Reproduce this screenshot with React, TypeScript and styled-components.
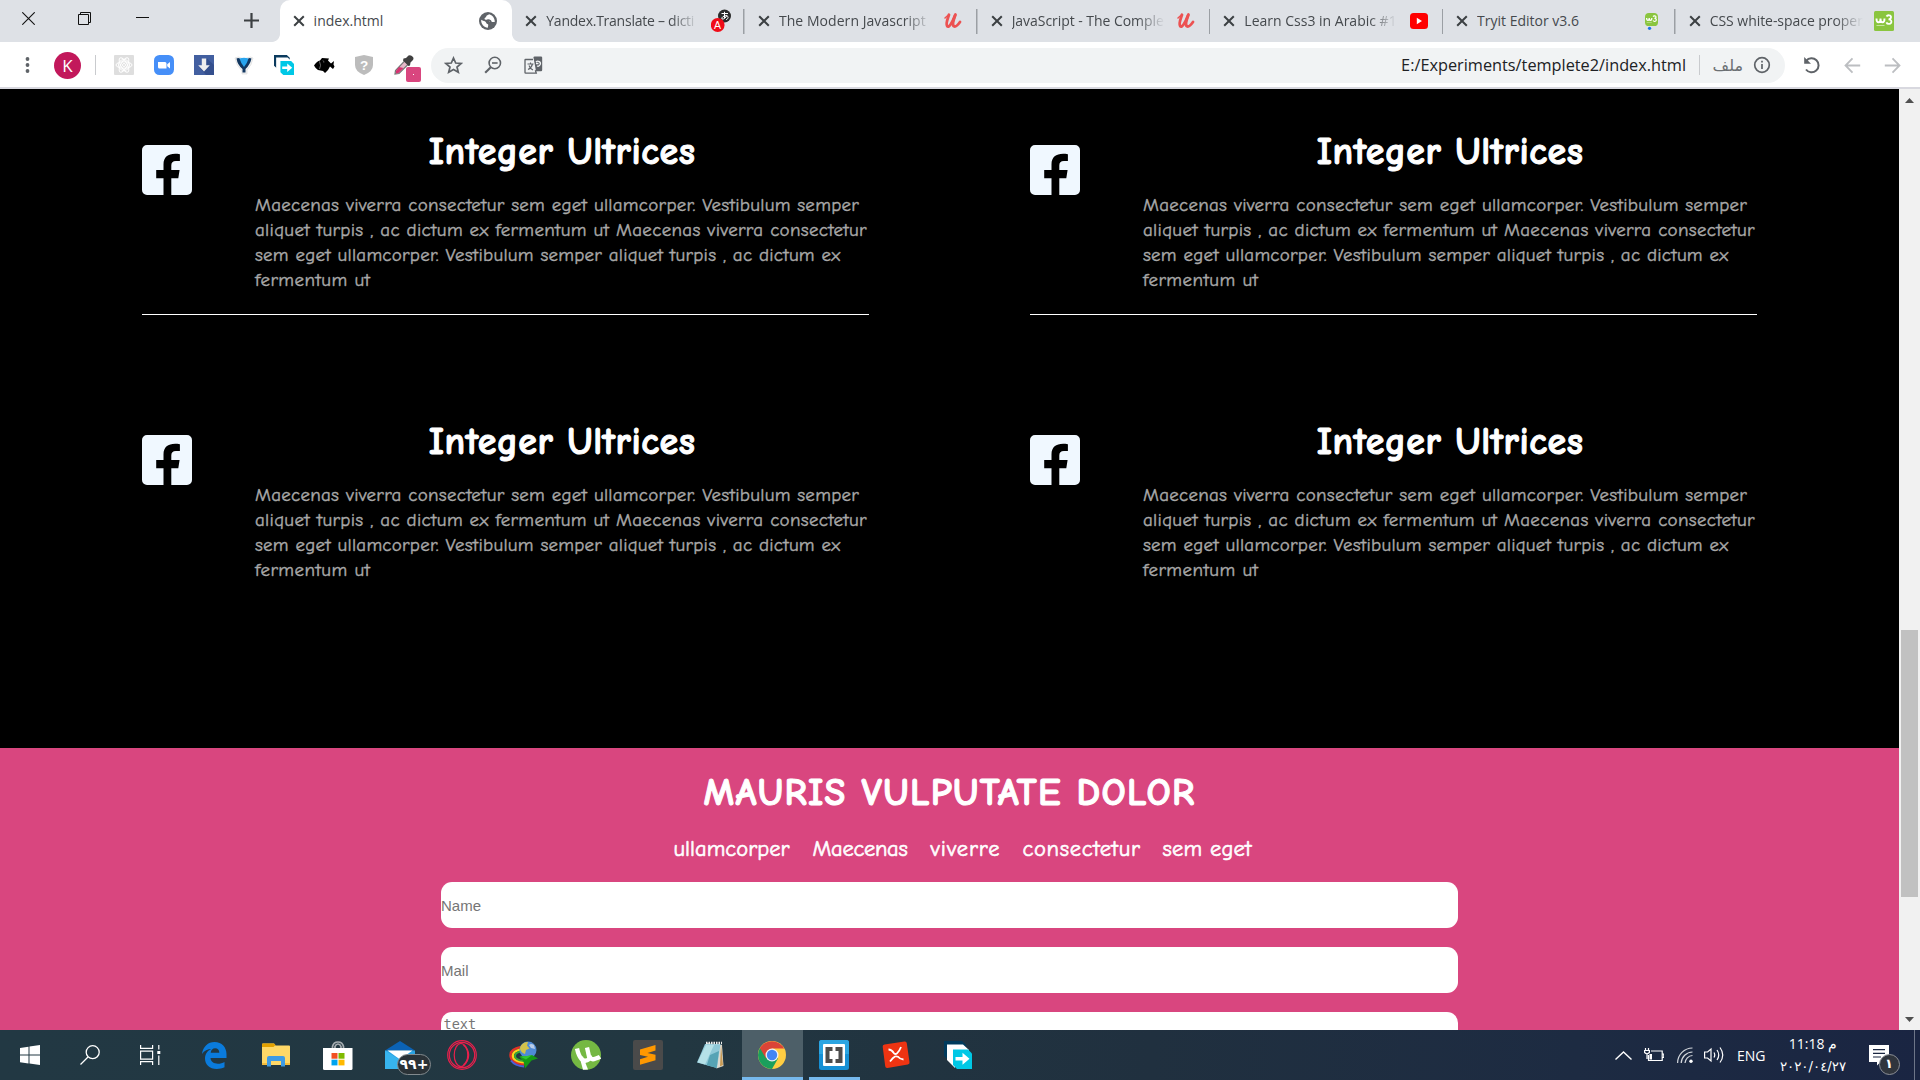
import React from 'react';
import styled, { createGlobalStyle, css } from 'styled-components';

const comic = '"Comic Sans MS", "Comic Neue", "Open Sans", sans-serif';
const ui = '"Open Sans", "Noto Sans", sans-serif';

const GlobalStyle = createGlobalStyle`
  * { box-sizing: border-box; }
  body { margin: 0; overflow: hidden; background: #000; }
  svg { display: block; flex: none; }
`;

const Screen = styled.div`
  width: 1920px;
  height: 1080px;
  display: flex;
  flex-direction: column;
  overflow: hidden;
  font-family: ${ui};
`;

/* ---------- tab strip ---------- */

const TabStrip = styled.div`
  height: 42px;
  flex: none;
  display: flex;
  background: #dee1e6;
`;

const WindowControls = styled.div`
  width: 279.6px;
  flex: none;
  display: flex;
  align-items: flex-start;
  padding: 12px 0 0 22px;
`;

const ControlSlot = styled.span<{ $gap: number; $drop?: number }>`
  margin-right: ${(p) => p.$gap}px;
  margin-top: ${(p) => p.$drop ?? 0}px;
`;

const Tab = styled.div<{ $active?: boolean; $divided?: boolean }>`
  position: relative;
  width: 232.7px;
  flex: none;
  display: flex;
  align-items: center;
  padding-left: 13px;
  background: ${(p) => (p.$active ? '#fff' : 'transparent')};
  border-radius: 10px 10px 0 0;
  ${(p) =>
    p.$divided &&
    css`
      background: linear-gradient(#9b9fa4, #9b9fa4) right 0 top 9px / 1.5px 25px no-repeat;
      border-radius: 0;
    `}
  ${(p) =>
    p.$active &&
    css`
      &::before,
      &::after {
        content: '';
        position: absolute;
        bottom: 0;
        width: 8px;
        height: 8px;
      }
      &::before {
        left: -8px;
        background: radial-gradient(circle at 0 0, transparent 7.5px, #fff 8.2px);
      }
      &::after {
        right: -8px;
        background: radial-gradient(circle at 100% 0, transparent 7.5px, #fff 8.2px);
      }
    `}
`;

const TabTitle = styled.span<{ $fade?: boolean; $spacing?: number }>`
  width: 153px;
  margin: 0 11px 0 9px;
  flex: none;
  overflow: hidden;
  white-space: nowrap;
  font-size: 14px;
  line-height: 20px;
  letter-spacing: ${(p) => p.$spacing ?? 0}px;
  color: #45494d;
  ${(p) => p.$fade && 'mask-image: linear-gradient(90deg, #000 calc(100% - 28px), transparent);'}
`;

const Favicon = styled.span`
  width: 21px;
  display: flex;
  justify-content: center;
`;

/* ---------- toolbar ---------- */

const Toolbar = styled.div`
  height: 47px;
  flex: none;
  display: flex;
  align-items: center;
  padding: 1px 0 0 22px;
  background: #fff;
  border-bottom: 2px solid #d8d8df;
`;

const Avatar = styled.span`
  width: 27px;
  height: 27px;
  margin: 0 14px 0 21px;
  border-radius: 50%;
  display: grid;
  place-items: center;
  background: #c2185b;
  color: #fff;
  font: 17px/27px ${ui};
`;

const Rule = styled.span`
  width: 1px;
  height: 20px;
  background: #c9cbce;
`;

const Extensions = styled.div`
  width: 319px;
  display: flex;
  padding-left: 8px;
  margin-right: 16px;
`;

const Extension = styled.span`
  position: relative;
  width: 40px;
  flex: none;
  display: grid;
  place-items: center;
`;

const ColorBadge = styled.i`
  position: absolute;
  left: 22px;
  top: 12px;
  width: 15px;
  height: 15px;
  border-radius: 2px;
  background: #d9467f;
  display: grid;
  place-items: center;
  &::after {
    content: '';
    width: 1.5px;
    height: 1.5px;
    background: #fff;
  }
`;

const Omnibox = styled.div`
  width: 1354px;
  height: 35px;
  flex: none;
  display: flex;
  align-items: center;
  padding: 0 14px 0 12px;
  border-radius: 18px;
  background: #f1f3f4;
`;

const OmniIcon = styled.span`
  width: 40px;
  display: flex;
  padding-left: 1px;
`;

const Address = styled.span`
  margin-left: auto;
  margin-right: 13px;
  font-size: 16.3px;
  letter-spacing: 0;
  color: #202124;
`;

const Scheme = styled.span`
  width: 33px;
  margin: 0 10px;
  font: 16px 'DejaVu Sans', sans-serif;
  color: #6b6f73;
  direction: rtl;
  white-space: nowrap;
`;

const NavButtons = styled.div`
  display: flex;
  padding-left: 7px;
`;

const NavButton = styled.span`
  width: 40px;
  display: grid;
  place-items: center;
`;

/* ---------- page ---------- */

const Viewport = styled.div`
  height: 941px;
  flex: none;
  display: flex;
`;

const Page = styled.main`
  width: 1899px;
  height: 941px;
  overflow: hidden;
  background: #000;
`;

const Features = styled.section`
  height: 659px;
  display: grid;
  grid-template-columns: 727px 727px;
  grid-template-rows: 290px 290px;
  column-gap: 161px;
  padding-left: 142px;
`;

const Feature = styled.article<{ $ruled?: boolean }>`
  height: 226px;
  display: flex;
  padding-top: 56px;
  border-bottom: ${(p) => (p.$ruled ? '1px solid #fff' : 'none')};
`;

const FeatureBody = styled.div`
  width: 614px;
  margin-left: 63px;
  margin-top: -17px;
`;

const FeatureTitle = styled.h2`
  margin: 0 0 17px;
  height: 48px;
  text-align: center;
  font: bold 38px/48px ${comic};
  letter-spacing: 0.5px;
  color: #fff;
  -webkit-text-stroke: 1px #fff;
`;

const FeatureText = styled.p`
  margin: 0;
  font: 19px/25px ${comic};
  color: #a9a9a9;
  -webkit-text-stroke: 0.4px #a9a9a9;
`;

const Line = styled.span<{ $spacing: number }>`
  display: block;
  white-space: nowrap;
  letter-spacing: ${(p) => p.$spacing}px;
`;

const Contact = styled.section`
  height: 282px;
  display: flex;
  flex-direction: column;
  align-items: center;
  padding-top: 21px;
  overflow: hidden;
  background: #d9467f;
`;

const ContactTitle = styled.h2`
  margin: 0;
  height: 48px;
  font: bold 38px/48px ${comic};
  letter-spacing: 1.3px;
  color: #fff;
  -webkit-text-stroke: 1px #fff;
`;

const Links = styled.nav`
  display: grid;
  grid-template-columns: 139px 118px 92px 140px 90px;
  width: 579px;
  height: 30px;
  margin: 17px 0 18px 27px;
`;

const Link = styled.a<{ $spacing: number }>`
  font: 22.5px/30px ${comic};
  letter-spacing: ${(p) => p.$spacing}px;
  white-space: nowrap;
  color: #fff;
  -webkit-text-stroke: 0.6px #fff;
`;

const Field = styled.input`
  width: 1017px;
  height: 46px;
  flex: none;
  margin: 0 0 19px;
  padding: 0;
  border: 0;
  border-radius: 11px;
  background: #fff;
  font: 15px 'Liberation Sans', Arial, sans-serif;
  &::placeholder {
    color: #757575;
  }
`;

const Message = styled.textarea`
  width: 1017px;
  height: 80px;
  flex: none;
  padding: 3px 2.5px;
  border: 0;
  border-radius: 11px;
  resize: none;
  background: #fff;
  font: 13.6px/18px 'DejaVu Sans Mono', monospace;
  &::placeholder {
    color: #757575;
  }
`;

const Scrollbar = styled.div`
  width: 21px;
  height: 941px;
  display: flex;
  flex-direction: column;
  align-items: center;
  padding: 9px 1px 8px 0;
  background: #f1f1f1;
`;

const Thumb = styled.div`
  width: 17px;
  height: 267px;
  margin: 527px 0 auto 1px;
  background: #c1c1c1;
`;

/* ---------- taskbar ---------- */

const Taskbar = styled.footer`
  height: 50px;
  flex: none;
  display: flex;
  background: linear-gradient(90deg, #223843 0%, #223741 35%, #20303f 60%, #1d2b42 82%, #1a2542 100%);
  color: #fff;
`;

const SystemButton = styled.span`
  width: 60px;
  display: grid;
  place-items: center;
`;

const AppButton = styled.span<{ $state?: 'active' | 'running' }>`
  position: relative;
  width: 62px;
  display: grid;
  place-items: center;
  ${(p) =>
    p.$state === 'active' &&
    css`
      background: linear-gradient(#76b9ed, #76b9ed) 1px 100% / 61px 3px no-repeat,
        linear-gradient(#4d5f68, #4d5f68) 1px 0 / 61px 100% no-repeat;
    `}
  ${(p) =>
    p.$state === 'running' &&
    css`
      background: linear-gradient(#76b9ed, #76b9ed) 6px 100% / 51px 3px no-repeat;
    `}
`;

const Apps = styled.div`
  display: flex;
  padding-left: 3px;
`;

const MailBadge = styled.i`
  position: absolute;
  left: 28px;
  top: 24px;
  width: 34px;
  height: 21px;
  border: 1px solid #838a8e;
  border-radius: 11px;
  background: #2a3237;
  font: bold 14px/18px 'DejaVu Sans', sans-serif;
  text-align: center;
  direction: ltr;
  unicode-bidi: bidi-override;
`;

const Tray = styled.div`
  margin-left: auto;
  width: 305px;
  display: flex;
  align-items: center;
`;

const TrayIcon = styled.span<{ $width: number }>`
  width: ${(p) => p.$width}px;
  flex: none;
`;

const Language = styled.span`
  width: 42px;
  padding-top: 1px;
  font-size: 14px;
`;

const Clock = styled.div`
  width: 68px;
  display: flex;
  flex-direction: column;
  align-items: center;
  font: 14px/22px ${ui};
  white-space: nowrap;
`;

const Time = styled.span`
  letter-spacing: -0.4px;
`;

const DateText = styled.span`
  direction: ltr;
  unicode-bidi: bidi-override;
  padding-top: 1px;
  font: 13.3px/22px 'DejaVu Sans', sans-serif;
`;

const Notifications = styled.span`
  position: relative;
  width: 46px;
  height: 50px;
  margin-left: 22px;
  padding-top: 15px;
  border-right: 1px solid #6d7688;
`;

const Count = styled.i`
  position: absolute;
  left: 9.5px;
  top: 24px;
  width: 21px;
  height: 21px;
  border: 1px solid #8b8f96;
  border-radius: 50%;
  background: #30353d;
  font: bold 13px/18px 'DejaVu Sans', sans-serif;
  text-align: center;
`;

/* ---------- drawings ---------- */

const CloseGlyph = () => (
  <svg width="12" height="12" viewBox="0 0 12 12" stroke="#3c4043" strokeWidth="2" fill="none">
    <path d="M1.2 1.2 10.8 10.8M10.8 1.2 1.2 10.8" />
  </svg>
);

const Globe = () => (
  <svg width="18" height="18" viewBox="0 0 18 18">
    <circle cx="9" cy="9" r="9" fill="#5f6368" />
    <path d="M10.200 2.200c-1 .8-3 1-3 2.400 0 1.200-1.700.8-1.700 2.200 0 1 1.300.9 2.700.9 1.700 0 1.200 1.700 2.600 1.700 1.100 0 1.700.6 3.200.6 1 0 1.700-.5 1.900-.3C15.500 5.700 13.500 3 10.200 2.200z" fill="#fff" />
    <path d="M2.200 7.700c1.800 1 3.700 1.300 4.500 2.200.9 1 .5 1.600 1.800 2 1.300.5.6 1.700.3 3.800C5 15.500 1.800 12 2.200 7.700z" fill="#fff" />
    <path d="M7.800 8.800c1.500-1.300 3.700-.5 4.200 1.200" fill="none" stroke="#5f6368" strokeWidth="1.600" />
  </svg>
);

const YandexIcon = () => (
  <svg width="20" height="24" viewBox="0 0 20 24">
    <circle cx="13.500" cy="7" r="6.500" fill="#2b2b2b" />
    <path d="M10.500 4.500h6.500M13.500 2.800v6.500M16 6c-1 3-3.500 4.500-5 4 -1-1 1.500-3.500 4-3.300 3 .3 2.500 3.300 0 4" fill="none" stroke="#fff" strokeWidth="1" />
    <circle cx="6.700" cy="16" r="6.900" fill="#f00c18" />
    <text x="3" y="20" fontSize="10.500" fill="#fff" fontFamily="Liberation Sans">A</text>
  </svg>
);

const Udemy = () => (
  <svg width="20" height="20" viewBox="0 0 20 20" fill="none" stroke="#ec5252" strokeLinecap="round" strokeLinejoin="round">
    <path strokeWidth="2.800" d="M6 3.800C4.800 7.500 2.300 13 4.200 15.300 6.200 17 9.500 11 12 4.500" />
    <path strokeWidth="2.800" d="M12.500 3.500C11 8 8.500 13.500 11 15.300c2 1 4-1.500 6-4.300" />
    <path strokeWidth="1.500" d="M2 7 6 3.500" />
  </svg>
);

const YouTube = () => (
  <svg width="18" height="16" viewBox="0 0 18 16">
    <rect width="18" height="16" rx="3.500" fill="#f00" />
    <path d="M6.800 4.800v6.400L12 8z" fill="#fff" />
  </svg>
);

const W3 = ({ size, dot }: { size: number; dot?: boolean }) => (
  <svg width={size} height={dot ? size + 4 : size} viewBox={`0 0 20 ${dot ? 26 : 20}`}>
    <rect width="20" height="20" rx={dot ? 6 : 1.5} fill="#8ac53f" />
    <path d="M2.500 7.500c0 5 4 5 4 0 0 5 4 5 4 0" fill="none" stroke="#fff" strokeWidth="1.900" />
    <path d="M12.500 5.500c1-2 4.700-1.500 4.500.8-.1 1.700-1.500 2-2.500 2 1.500 0 3 .7 2.900 2.500-.1 2.500-4 3-5 .5" fill="none" stroke="#fff" strokeWidth="1.800" />
    <path d="M2.500 14.500h8" stroke="#c7e4a0" strokeWidth="1" />
    {dot && <circle cx="7" cy="23.500" r="2.500" fill="#1a73e8" />}
  </svg>
);

const ReactExt = () => (
  <svg width="20" height="20" viewBox="0 0 20 20" fill="none" stroke="#fff" strokeWidth="1">
    <rect width="20" height="20" rx="1" fill="#dedede" stroke="none" />
    <ellipse cx="10" cy="10" rx="8" ry="3.200" />
    <ellipse cx="10" cy="10" rx="8" ry="3.200" transform="rotate(60 10 10)" />
    <ellipse cx="10" cy="10" rx="8" ry="3.200" transform="rotate(120 10 10)" />
    <circle cx="10" cy="10" r="5.500" />
    <circle cx="10" cy="10" r="1.500" />
  </svg>
);

const ZoomExt = () => (
  <svg width="20" height="20" viewBox="0 0 20 20">
    <rect width="20" height="20" rx="5.500" fill="#468ff8" />
    <path d="M4 7h7q1.500 0 1.500 1.500V13.500H5.500Q4 13.500 4 12z M13.200 9.300 16 7v6.500l-2.800-2.200z" fill="#fff" />
  </svg>
);

const DownExt = () => (
  <svg width="20" height="20" viewBox="0 0 20 20">
    <rect width="20" height="20" fill="#425fa0" />
    <path d="M13 3.500 20 10v10H12L6 13z" fill="#344f8d" />
    <path d="M7.800 3.500h4.400v6.700h3.600L10 16.500 4.200 10.200h3.600z" fill="#eee" />
  </svg>
);

const VExt = () => (
  <svg width="20" height="20" viewBox="0 0 20 20">
    <path d="M1 3q4-2 6 0 3 2 6 0 4-2 6 0-1 7-6 12v4H8v-3Q2 10 1 3z" fill="#f2f2f2" stroke="#ddd" strokeWidth=".7" />
    <path d="M2.500 3.500Q5 2 7 4.500l3 6 3-6q2-2.500 4.500-1Q16 10 11.500 14v3.500h-3V14Q3.500 10 2.500 3.500z" fill="#123760" />
    <path d="M5.500 3.500q4.500-1.500 9 0-1.500 5.500-4.500 8.500Q7 8.500 5.500 3.500z" fill="#28a4ee" />
  </svg>
);

const TealStack = ({ size, dark }: { size: number; dark: string }) => (
  <svg width={size} height={size} viewBox="0 0 28 28">
    <path d="M0 0h18l4 4v6H8v12L0 15z" fill={dark} />
    <path d="M3 3.500h16l6 5.500v3H11v15l-8-8z" fill="#fff" />
    <path d="M9 8.500h15l4 4V28H13l-4-4z" fill="#00c8e6" />
    <path d="M11.500 16h7v-4.200l7 6-7 6v-4.200h-7z" fill="#fff" />
  </svg>
);

const Fish = () => (
  <svg width="21" height="16" viewBox="0 0 21 16">
    <path d="M0 8.500Q3 4 6 3.500L8 1l7 .5-1 2 3 3 3-2.500-.500 3.500 1 2-1.500 2.500L16 9.500l-2 3.500-3 3-2-2-5-1Q1.500 11.500 0 8.500z" fill="#000" />
    <path d="M5.500 4.500q2 4 0 7.500M9 3.500q1 1 .8 2" fill="none" stroke="#888" strokeWidth=".8" />
  </svg>
);

const ShieldExt = () => (
  <svg width="18" height="20" viewBox="0 0 18 20">
    <path d="M9 0l9 2v8q0 6.500-9 10Q0 16.500 0 10V2z" fill="#bcbcbc" />
    <text x="5" y="14.500" fontSize="13.500" fontWeight="bold" fill="#fff" fontFamily="Liberation Sans">?</text>
  </svg>
);

const Pipette = () => (
  <svg width="20" height="20" viewBox="0 0 20 20">
    <path d="M11 5.500 14.500 9 5 18.500 1 19l.5-3.500z" fill="#e6b8c9" stroke="#777" strokeWidth="1.200" />
    <path d="M5 12 9.500 13 4.500 18 2 18.500 2 16z" fill="#d63371" />
    <path d="M9.500 3.500 12 3l2.500-2.500Q17-.5 19 2q1.200 2-.5 3.500L16.500 7.500 16 10.500 14.500 11 9 5.500z" fill="#404040" />
  </svg>
);

const Star = () => (
  <svg width="19" height="18" viewBox="0 0 19 18" fill="none" stroke="#5f6368" strokeWidth="1.700">
    <path d="M9.500 2l2.200 5 5.400.5-4.100 3.500 1.300 5.200-4.800-2.800-4.800 2.800L6 11 1.900 7.500 7.300 7z" />
  </svg>
);

const ZoomOut = () => (
  <svg width="18" height="18" viewBox="0 0 18 18" fill="none" stroke="#5f6368" strokeWidth="1.600">
    <circle cx="10.800" cy="7" r="5.700" />
    <path d="M8 7h5.600" />
    <path d="M6.800 11.200 1.200 16.800" strokeWidth="2.100" />
  </svg>
);

const Translate = () => (
  <svg width="19" height="19" viewBox="0 0 19 19">
    <path d="M9 3.500H1.500Q1 3.500 1 4v12.500q0 .7.700.7h10.600l-1-3" fill="none" stroke="#5f6368" strokeWidth="1.300" />
    <path d="M9.500 1.500q0-1 1-1H17q1.200 0 1.200 1.200V14q0 1.200-1.200 1.200h-5z" fill="#5f6368" />
    <path d="M3.500 8h6M6.500 6.500V8M8.500 8q-1 4-4.500 5.500M5 9.500q1 3 4 4.500" fill="none" stroke="#5f6368" strokeWidth="1.100" />
    <path d="M12 6a2.500 2.500 0 1 1 1 4M14.500 7.500h-2.500" fill="none" stroke="#f1f3f4" strokeWidth="1.300" />
  </svg>
);

const Info = () => (
  <svg width="18" height="18" viewBox="0 0 18 18" fill="none" stroke="#5f6368" strokeWidth="1.700">
    <circle cx="9" cy="9" r="7.300" />
    <path d="M9 8v5M9 4.800v1.800" />
  </svg>
);

const Reload = () => (
  <svg width="19" height="19" viewBox="0 0 19 19">
    <path d="M3.200 4.800A7 7 0 1 1 3 13.500" fill="none" stroke="#5f6368" strokeWidth="2" />
    <path d="M1.200 1v6.800H8z" fill="#5f6368" />
  </svg>
);

const Arrow = ({ flip }: { flip?: boolean }) => (
  <svg width="17" height="17" viewBox="0 0 17 17" fill="none" stroke="#bcbec1" strokeWidth="1.800">
    <path d={flip ? 'M.8 8.500h14.500M8.500 1.300l7 7.200-7 7.200' : 'M16.200 8.500H1.700M8.500 1.300l-7 7.200 7 7.200'} />
  </svg>
);

const FacebookSquare = () => (
  <svg width="50" height="50" viewBox="0 0 50 50">
    <path
      d="M5 0h40a5 5 0 0 1 5 5v40a5 5 0 0 1-5 5H29.300V33.200h7l1.300-8.200h-8.300v-4.600c0-2.600 1.400-4.300 4.600-4.300h4V9.200c-9.700-1.700-16.400 1.300-16.400 10.200V25h-7.300v8.200h7.300V50H5a5 5 0 0 1-5-5V5a5 5 0 0 1 5-5z"
      fill="#f0f8ff"
    />
  </svg>
);

const WindowsLogo = () => (
  <svg width="20" height="20" viewBox="0 0 20 20" fill="#fff">
    <path d="M0 2.900 8.500 1.700V9.500H0zM9.500 1.500 20 0v9.500H9.500zM0 10.500h8.500v7.900L0 17.200zM9.500 10.500H20V20L9.500 18.500z" />
  </svg>
);

const SearchGlyph = () => (
  <svg width="20" height="20" viewBox="0 0 20 20" fill="none" stroke="#fff" strokeWidth="1.300">
    <circle cx="12.700" cy="7.200" r="6.500" />
    <path d="M8 12 .5 19.500" />
  </svg>
);

const TaskView = () => (
  <svg width="21" height="20" viewBox="0 0 21 20" fill="none" stroke="#fff" strokeWidth="1.200">
    <path d="M.6 0v3.400h12V0M.6 20v-3.400h12V20M.6 6.200h12v8H.6zM18.800 0v4.500M18.800 10.500V20" />
    <path d="M17.300 6h3v3h-3z" fill="#fff" stroke="none" />
  </svg>
);

const Edge = () => (
  <svg width="25" height="27" viewBox="0 0 25 27">
    <path d="M0 12C1 4.500 6 0 12.500 0 20 0 24.500 5.500 24.500 12v4H8.500c.3 4 3.500 5.700 7.300 5.700 2.500 0 4.800-.7 6.700-1.800v5.400c-2.200 1.100-4.900 1.700-7.700 1.700C7.500 27 3 22.500 3 16.500c0-4.300 2.500-7.800 6.300-9.500C6 7 2 8.700 0 12zm8.700-1.200h8.600c0-3-1.500-4.500-4.200-4.500-2.500 0-4 1.700-4.400 4.500z" fill="#0a7bdc" />
  </svg>
);

const Explorer = () => (
  <svg width="28" height="24" viewBox="0 0 28 24">
    <path d="M0 1.500Q0 .5 1 .5h11l1.500 2H27q1 0 1 1V22H0z" fill="#ffd867" />
    <path d="M0 1.500Q0 .5 1 .5h11l1.500 1.500-2 2H0z" fill="#e3a100" />
    <path d="M5 23.500V15q0-2 2-2h14q2 0 2 2v8.500h-4V18H9v5.500z" fill="#3f9be4" />
    <path d="M0 20h5v2H0zM23 20h5v2h-5z" fill="#f5bc3b" />
  </svg>
);

const Store = () => (
  <svg width="30" height="29" viewBox="0 0 30 29">
    <path d="M9.500 8V5.500Q10.500 1 15 1t5.500 4.500V8M12 8V5.500Q13 3 15 3t3 2.500V8" fill="none" stroke="#a6adb1" strokeWidth="1.700" />
    <path d="M0 7h29.500v20.500q0 1.500-1.500 1.500H1.500Q0 29 0 27.500z" fill="#fff" />
    <path d="M8.500 12h6v5.700h-6z" fill="#f25022" />
    <path d="M15.500 12h6v5.700h-6z" fill="#7fba00" />
    <path d="M8.500 18.700h6v5.700h-6z" fill="#00a4ef" />
    <path d="M15.500 18.700h6v5.700h-6z" fill="#ffb900" />
  </svg>
);

const Mail = () => (
  <svg width="30" height="28" viewBox="0 0 30 28">
    <path d="M0 9.500 15 0l15 9.500z" fill="#0b62b4" />
    <path d="M0 9.500h30V28H0z" fill="#2aa2e2" />
    <path d="M2.500 9.500h25L15 18.500z" fill="#fff" />
    <path d="M0 9.500 15 19v9H0z" fill="#37b4ee" />
  </svg>
);

const Opera = () => (
  <svg width="30" height="30" viewBox="0 0 30 30" fill="none" stroke="#e8204c" strokeWidth="1.200">
    <circle cx="15" cy="15" r="14.300" />
    <circle cx="15" cy="15" r="12.700" />
    <ellipse cx="14" cy="15" rx="6.800" ry="11.500" />
    <path d="M16.500 5q5 4 5 10t-5 10" strokeWidth="1.600" />
  </svg>
);

const Idm = () => (
  <svg width="30" height="28" viewBox="0 0 30 28">
    <path d="M12 6Q1.500 8 1.500 14q0 8 14 9.500" fill="none" stroke="#e13226" strokeWidth="2.500" />
    <path d="M12 8.300Q3.800 10 3.800 14.500q0 6 12 7" fill="none" stroke="#ffd21a" strokeWidth="2.200" />
    <path d="M12 10.500q-6 1-6 4.500 0 4 9 5" fill="none" stroke="#39a935" strokeWidth="2" />
    <path d="M2 19.500q4 5.500 13 6" fill="none" stroke="#4c5fd8" strokeWidth="2" />
    <circle cx="19" cy="9" r="8.500" fill="#4f8bd6" />
    <path d="M12 4.500q3-4 7-3.500l-1 3.500 2.500 3-3.500 1.500-1 4q-5-2-5-6z" fill="#d2c34a" />
    <path d="M20 4q2-2 5 0l1 4-4-1z" fill="#b9cde8" />
    <path d="M10 15.500q8 0 13-1.500l6 3.500-6.500 2L16 27.500l-1.500-7z" fill="#169a16" />
    <path d="M11 15.500q8-.5 12-1.500l-6 4.500z" fill="#31c830" />
  </svg>
);

const UTorrent = () => (
  <svg width="30" height="30" viewBox="0 0 30 30">
    <circle cx="15" cy="15" r="15" fill="#75b843" />
    <path d="M6 8.500q1.500 7 4.500 10.500 3.500 3.500 8-.2L16 7.500M18.500 16q1.500 4.500 5.500 2.800 3.500-1 5-2" fill="none" stroke="#fff" strokeWidth="4.300" />
    <path d="M8.500 17l3.500-.5 5 13-5 .2z" fill="#fff" />
  </svg>
);

const Sublime = () => (
  <svg width="30" height="30" viewBox="0 0 30 30">
    <rect width="30" height="30" rx="2" fill="#4a4a4a" />
    <path d="M7 9.500 22.500 5v5.500L14.500 13l8 1.700v5.500L7 24.800v-5.500l8-2.600-8-1.700z" fill="#ff9800" />
  </svg>
);

const Notepad = () => (
  <svg width="28" height="28" viewBox="0 0 28 28">
    <path d="M10 2 26 4l1.500 21-7 2.500z" fill="#ddd9cf" />
    <path d="M25 4l2 20-3 1.500z" fill="#c79a54" />
    <path d="M9 3h15.500L21 27 1 21.500z" fill="#8fc9d8" />
    <path d="M10 4h8L9 23.500 1.500 21.300z" fill="#b5e1e8" />
    <path d="M14 14 23 10l-2.300 17-10-2.700z" fill="#56a3b5" />
    <path d="M10 2h16" stroke="#eee" strokeWidth="2.500" strokeDasharray="1.500 1" />
  </svg>
);

const Chrome = () => (
  <svg width="28" height="28" viewBox="0 0 28 28">
    <circle cx="14" cy="14" r="14" fill="#ffcd42" />
    <path d="M14 14 1.900 7A14 14 0 0 0 14 28l6-10.500z" fill="#1b9f5c" />
    <path d="M1.900 7A14 14 0 0 1 26.100 7.500H14L8 17.500z" fill="#db4437" />
    <circle cx="14" cy="14" r="6.500" fill="#f1f1f1" />
    <circle cx="14" cy="14" r="5.200" fill="#4285f4" />
  </svg>
);

const Brackets = () => (
  <svg width="30" height="30" viewBox="0 0 30 30">
    <rect width="30" height="30" rx="2.500" fill="#1690d5" />
    <path d="M0 2.500Q0 0 2.500 0h25Q30 0 30 2.500V14H0z" fill="#2ba5e2" />
    <rect x="4" y="4" width="22" height="22" rx="1" fill="#fff" />
    <path d="M6.500 7h7v4h-3v8h3v4h-7zM23.500 7h-7v4h3v8h-3v4h7z" fill="#4d4d4d" />
  </svg>
);

const XMind = () => (
  <svg width="28" height="28" viewBox="0 0 28 28">
    <path d="M2.500 3.500 22.500.5q2-.3 2.300 1.700l2.700 19q.3 2-1.700 2.400L5.500 27q-2 .3-2.300-1.700L.7 5.800Q.4 3.800 2.500 3.500z" fill="#ee3412" />
    <path d="M6.500 8.500q3 0 5.500 3.800 1.500 1.500 3 0Q17.500 10 19 6M8 20.500q3-4 5-5 1.500-.5 3 .3 2 2.500 5.500 2.700" fill="none" stroke="#fff" strokeWidth="1.800" />
  </svg>
);

const Battery = () => (
  <svg width="20" height="14" viewBox="0 0 20 14" fill="none" stroke="#fff" strokeWidth="1.200">
    <path d="M7 3h11.200v9.500H4.500V7M18.800 6h1v3.500h-1M1.500 0v2.500M4.500 0v2.500M.6 2.500h4.800v2Q3 7 .6 4.500zM3 6v5" />
    <path d="M5.500 6H8v5.500H5.500z" fill="#fff" stroke="none" />
  </svg>
);

const Wifi = () => (
  <svg width="16" height="16" viewBox="0 0 16 16" fill="none" stroke="#d5d9de" strokeWidth="1.200">
    <path d="M.6 16A15 15 0 0 1 15.500 1M4.200 16A11.500 11.500 0 0 1 15.500 5M8 16a8 8 0 0 1 7.500-7.500" />
    <circle cx="14" cy="14.300" r="1.700" fill="#fff" stroke="none" />
  </svg>
);

const Volume = () => (
  <svg width="21" height="18" viewBox="0 0 21 18" fill="none" stroke="#fff" strokeWidth="1.200">
    <path d="M.6 6h3L7 3v12l-3.400-3h-3zM10 6.500q1.500 2.500 0 5M13 4q3.500 5 0 10M16 1.500q5.500 7.500 0 15" />
  </svg>
);

const NoticeGlyph = () => (
  <svg width="20" height="21" viewBox="0 0 20 21">
    <path d="M0 0h20v17H11.500L8 20.500V17H0z" fill="#fff" />
    <path d="M4 4.600h12M4 8.300h12M4 12h8" stroke="#1b2741" strokeWidth="1.200" />
  </svg>
);

/* ---------- content ---------- */

const tabs = [
  { title: 'index.html', icon: <Globe />, active: true },
  { title: 'Yandex.Translate – dicti', icon: <YandexIcon />, divided: true, fade: true, spacing: -0.25 },
  { title: 'The Modern Javascript', icon: <Udemy />, divided: true, fade: true, spacing: 0.05 },
  { title: 'JavaScript - The Comple', icon: <Udemy />, divided: true, fade: true, spacing: -0.05 },
  { title: 'Learn Css3 in Arabic #1', icon: <YouTube />, divided: true, fade: true },
  { title: 'Tryit Editor v3.6', icon: <W3 size={13} dot />, divided: true },
  { title: 'CSS white-space proper', icon: <W3 size={20} />, fade: true, spacing: -0.05 },
];

const paragraph = [
  { text: 'Maecenas viverra consectetur sem eget ullamcorper. Vestibulum semper', spacing: 0.27 },
  { text: 'aliquet turpis , ac dictum ex fermentum ut Maecenas viverra consectetur', spacing: 0.32 },
  { text: 'sem eget ullamcorper. Vestibulum semper aliquet turpis , ac dictum ex', spacing: 0.25 },
  { text: 'fermentum ut', spacing: 0.45 },
];

const links = [
  { label: 'ullamcorper', spacing: 0.05 },
  { label: 'Maecenas', spacing: -0.28 },
  { label: 'viverre', spacing: 0.94 },
  { label: 'consectetur', spacing: 0.68 },
  { label: 'sem eget', spacing: 0.2 },
];

const extensions = [
  <ReactExt />,
  <ZoomExt />,
  <DownExt />,
  <VExt />,
  <TealStack size={20} dark="#0b3a5e" />,
  <Fish />,
  <ShieldExt />,
];

export default function App() {
  return (
    <Screen>
      <GlobalStyle />
      <TabStrip>
        <WindowControls>
          <ControlSlot $gap={43}>
            <svg width="13" height="13" viewBox="0 0 13 13" stroke="#111" strokeWidth="1.100">
              <path d="M.3.3 12.700 12.700M12.700.3.3 12.700" />
            </svg>
          </ControlSlot>
          <ControlSlot $gap={45}>
            <svg width="13" height="13" viewBox="0 0 13 13" fill="none" stroke="#111">
              <path d="M.5 2.500h10v10H.5zM2.500 2.500v-2h10v10h-2" />
            </svg>
          </ControlSlot>
          <ControlSlot $gap={95} $drop={5}>
            <svg width="13" height="1" viewBox="0 0 13 1">
              <path d="M0 0h13v1H0z" fill="#111" />
            </svg>
          </ControlSlot>
          <ControlSlot $gap={0} $drop={1}>
            <svg width="15" height="15" viewBox="0 0 15 15" stroke="#3c4043" strokeWidth="2.200">
              <path d="M7.500 0v15M0 7.500h15" />
            </svg>
          </ControlSlot>
        </WindowControls>
        {tabs.map((t) => (
          <Tab key={t.title} $active={t.active} $divided={t.divided}>
            <CloseGlyph />
            <TabTitle $fade={t.fade} $spacing={t.spacing}>{t.title}</TabTitle>
            <Favicon>{t.icon}</Favicon>
          </Tab>
        ))}
      </TabStrip>

      <Toolbar>
        <svg width="11" height="16" viewBox="0 0 11 16" fill="#5f6368">
          <circle cx="5.500" cy="2" r="1.900" />
          <circle cx="5.500" cy="8" r="1.900" />
          <circle cx="5.500" cy="14" r="1.900" />
        </svg>
        <Avatar>K</Avatar>
        <Rule />
        <Extensions>
          {extensions.map((icon, i) => (
            <Extension key={i}>{icon}</Extension>
          ))}
          <Extension>
            <Pipette />
            <ColorBadge />
          </Extension>
        </Extensions>
        <Omnibox>
          <OmniIcon><Star /></OmniIcon>
          <OmniIcon><ZoomOut /></OmniIcon>
          <OmniIcon><Translate /></OmniIcon>
          <Address>E:/Experiments/templete2/index.html</Address>
          <Rule />
          <Scheme>ملف</Scheme>
          <Info />
        </Omnibox>
        <NavButtons>
          <NavButton><Reload /></NavButton>
          <NavButton><Arrow /></NavButton>
          <NavButton><Arrow flip /></NavButton>
        </NavButtons>
      </Toolbar>

      <Viewport>
        <Page>
          <Features>
            {[true, true, false, false].map((ruled, i) => (
              <Feature key={i} $ruled={ruled}>
                <FacebookSquare />
                <FeatureBody>
                  <FeatureTitle>Integer Ultrices</FeatureTitle>
                  <FeatureText>
                    {paragraph.map((l) => (
                      <Line key={l.text} $spacing={l.spacing}>{l.text}</Line>
                    ))}
                  </FeatureText>
                </FeatureBody>
              </Feature>
            ))}
          </Features>
          <Contact>
            <ContactTitle>MAURIS VULPUTATE DOLOR</ContactTitle>
            <Links>
              {links.map((l) => (
                <Link key={l.label} $spacing={l.spacing}>{l.label}</Link>
              ))}
            </Links>
            <Field placeholder="Name" />
            <Field placeholder="Mail" />
            <Message placeholder="text" />
          </Contact>
        </Page>
        <Scrollbar>
          <svg width="9" height="5" viewBox="0 0 9 5"><path d="M0 5 4.500 0 9 5z" fill="#505050" /></svg>
          <Thumb />
          <svg width="9" height="5" viewBox="0 0 9 5"><path d="M0 0h9L4.500 5z" fill="#505050" /></svg>
        </Scrollbar>
      </Viewport>

      <Taskbar>
        <SystemButton><WindowsLogo /></SystemButton>
        <SystemButton><SearchGlyph /></SystemButton>
        <SystemButton><TaskView /></SystemButton>
        <Apps>
          <AppButton><Edge /></AppButton>
          <AppButton><Explorer /></AppButton>
          <AppButton><Store /></AppButton>
          <AppButton>
            <Mail />
            <MailBadge>٩٩+</MailBadge>
          </AppButton>
          <AppButton><Opera /></AppButton>
          <AppButton><Idm /></AppButton>
          <AppButton><UTorrent /></AppButton>
          <AppButton><Sublime /></AppButton>
          <AppButton><Notepad /></AppButton>
          <AppButton $state="active"><Chrome /></AppButton>
          <AppButton $state="running"><Brackets /></AppButton>
          <AppButton><XMind /></AppButton>
          <AppButton><TealStack size={28} dark="#003a5c" /></AppButton>
        </Apps>
        <Tray>
          <TrayIcon $width={29}>
            <svg width="17" height="9" viewBox="0 0 17 9" fill="none" stroke="#fff" strokeWidth="1.400">
              <path d="M.5 8.500l8-7.500 8 7.500" />
            </svg>
          </TrayIcon>
          <TrayIcon $width={33}><Battery /></TrayIcon>
          <TrayIcon $width={27}><Wifi /></TrayIcon>
          <TrayIcon $width={33}><Volume /></TrayIcon>
          <Language>ENG</Language>
          <Clock>
            <Time>11:18 م</Time>
            <DateText>٢٠٢٠/٠٤/٢٧</DateText>
          </Clock>
          <Notifications>
            <NoticeGlyph />
            <Count>١</Count>
          </Notifications>
        </Tray>
      </Taskbar>
    </Screen>
  );
}
